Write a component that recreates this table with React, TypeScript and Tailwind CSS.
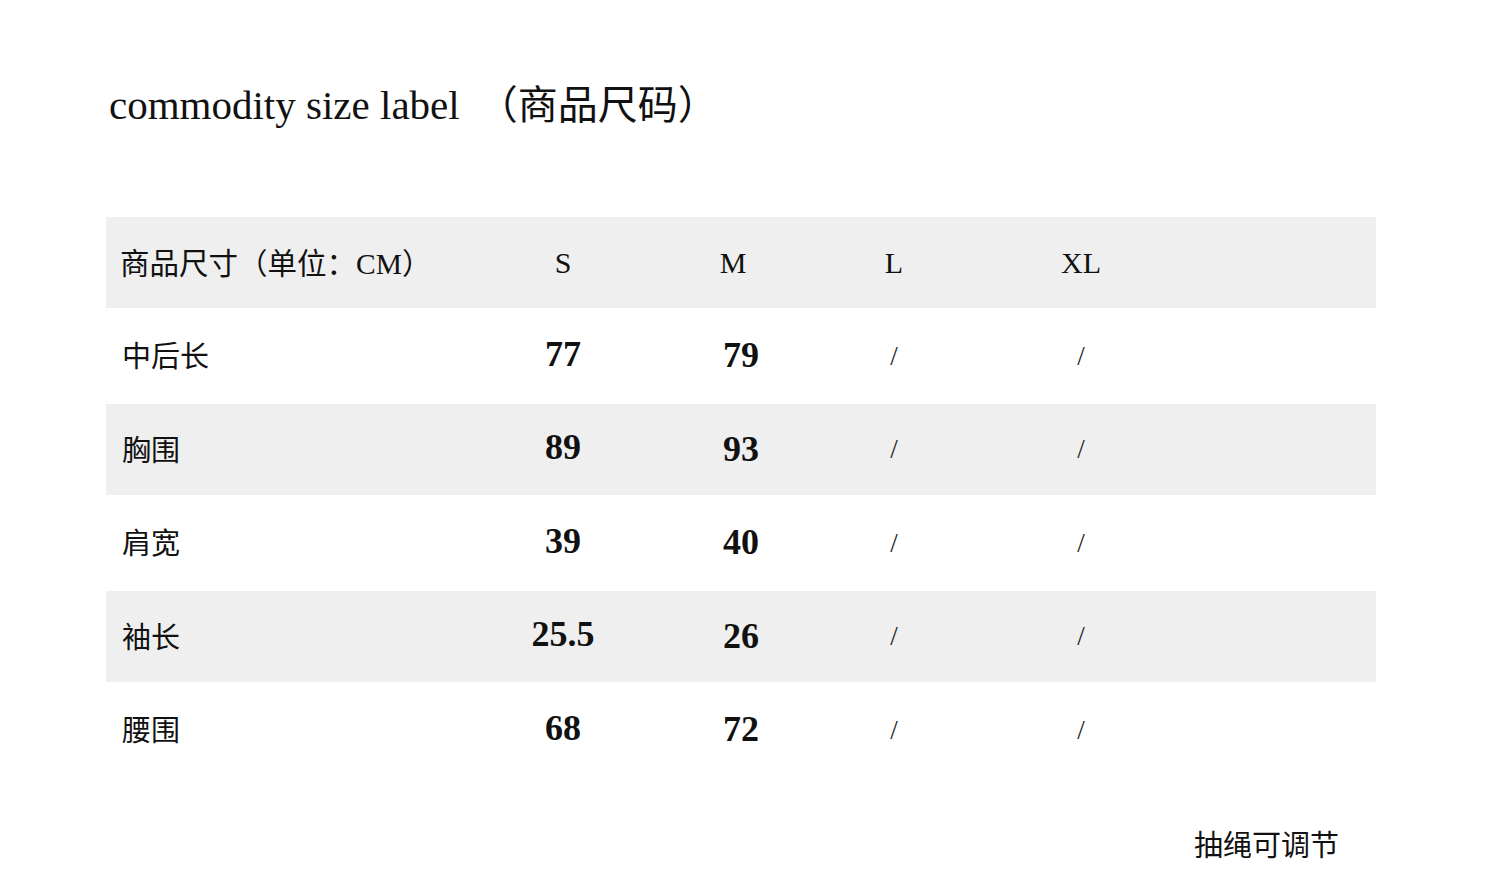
const rows = [
  { label: "中后长", s: "77", m: "79" },
  { label: "胸围", s: "89", m: "93" },
  { label: "肩宽", s: "39", m: "40" },
  { label: "袖长", s: "25.5", m: "26" },
  { label: "腰围", s: "68", m: "72" },
];

const cjk = "font-['Noto_Sans_CJK_SC','Noto_Sans',sans-serif]";
const serif = "font-['Liberation_Serif','Noto_Sans_CJK_SC',serif]";
const cols = "grid grid-cols-[370px_174px_174px_140px_234px_1fr] items-center";

export default function App() {
  return (
    <div className="w-[1500px] h-[895px] bg-white text-[#111] flex flex-col">
      {/* Title */}
      <div className="pl-[109px] pt-[82px] flex items-baseline">
        <span className={`text-[41px] leading-none ${serif}`}>commodity size label</span>
        <span className={`ml-[18px] text-[40px] leading-none ${cjk}`}>（商品尺码）</span>
      </div>

      {/* Table */}
      <div className="mt-[91px] mx-[106px] w-[1270px]">
        <div className={`${cols} h-[91px] bg-[#efefef]`}>
          <div className={`pl-[14px] text-[29.5px] ${cjk}`}>
            商品尺寸（单位：<span className={serif}>CM</span>）
          </div>
          <div className={`text-center text-[30px] ${serif}`}>S</div>
          <div className={`text-center text-[30px] pr-[8px] ${serif}`}>M</div>
          <div className={`text-center text-[30px] ${serif}`}>L</div>
          <div className={`text-center text-[30px] ${serif}`}>XL</div>
          <div />
        </div>
        {rows.map((r, i) => (
          <div
            key={r.label}
            className={`${cols} ${i % 2 === 0 ? "h-[96px] bg-white" : "h-[91px] bg-[#efefef]"}`}
          >
            <div className={`pl-[16px] pb-[2px] text-[29px] ${cjk}`}>{r.label}</div>
            <div className={`text-center pb-[5px] text-[36px] font-bold ${serif}`}>{r.s}</div>
            <div className={`text-center pb-[2px] text-[36px] font-bold pl-[8px] ${serif}`}>{r.m}</div>
            <div className={`text-center text-[27px] text-[#222] ${serif}`}>/</div>
            <div className={`text-center text-[27px] text-[#222] ${serif}`}>/</div>
            <div />
          </div>
        ))}
      </div>

      {/* Footer note */}
      <div className="mt-[44px] pl-[1194px]">
        <span className={`text-[29px] ${cjk}`}>抽绳可调节</span>
      </div>
    </div>
  );
}
